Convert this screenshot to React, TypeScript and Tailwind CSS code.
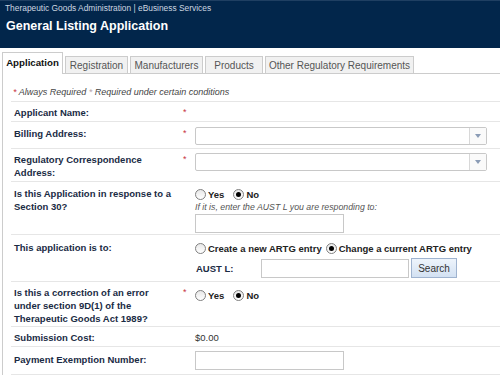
import React from "react";

const TABS = [
  { label: "Application", w: "w-[61px]", active: true },
  { label: "Registration", w: "w-[63px]", active: false },
  { label: "Manufacturers", w: "w-[73px]", active: false },
  { label: "Products", w: "w-[58px]", active: false },
  { label: "Other Regulatory Requirements", w: "w-[149px]", active: false },
];

function Star() {
  return <span className="text-[#c8343f]">*</span>;
}

function Radio({ checked }: { checked?: boolean }) {
  return (
    <span className="inline-flex w-[11px] h-[11px] rounded-full border border-[#808080] bg-gradient-to-b from-[#e8e8e8] to-white items-center justify-center shrink-0">
      {checked && <span className="w-[5px] h-[5px] rounded-full bg-black" />}
    </span>
  );
}

function RadioOpt({ label, checked }: { label: string; checked?: boolean }) {
  return (
    <span className="flex items-center gap-[2px]">
      <Radio checked={checked} />
      <span className="font-bold text-[9.5px] text-[#222]">{label}</span>
    </span>
  );
}

function Select() {
  return (
    <div className="w-[292px] h-[18px] border border-[#c8c8c8] rounded-[2px] bg-white flex justify-end">
      <div className="w-[17px] h-full border-l border-[#d8d8d8] flex items-center justify-center bg-[#fafafa]">
        <svg width="6" height="4" viewBox="0 0 6 4">
          <path d="M0 0 L6 0 L3 4 Z" fill="#8b9cb6" />
        </svg>
      </div>
    </div>
  );
}

function TextInput({ w }: { w: string }) {
  return <div className={`${w} h-[19px] border border-[#c8c8c8] bg-white`} />;
}

function Row({
  h,
  label,
  star,
  lpt,
  cpt,
  children,
}: {
  h: string;
  label: React.ReactNode;
  star?: boolean;
  lpt: string;
  cpt: string;
  children?: React.ReactNode;
}) {
  return (
    <div className={`flex ${h} border-b border-[#e6e6e6] text-[9.5px] leading-[13px]`}>
      <div className={`w-[172px] pl-[3px] ${lpt} font-bold text-[#1a2b44]`}>{label}</div>
      <div className={`w-[12px] ${lpt} text-[9px]`}>{star && <Star />}</div>
      <div className={`flex-1 ${cpt}`}>{children}</div>
    </div>
  );
}

export default function App() {
  return (
    <div className="w-[500px] h-[376px] overflow-hidden bg-white font-['Liberation_Sans',Arial,sans-serif]">
      {/* Header */}
      <div className="h-[48px] bg-[#02264b] border-t border-[#1f3f62] px-[5px]">
        <div className="pt-[1px] text-[8.4px] leading-[12px] text-[#cdd6e0]">
          Therapeutic Goods Administration | eBusiness Services
        </div>
        <div className="mt-[4px] pl-[1px] text-[12.5px] leading-[16px] font-bold text-white">
          General Listing Application
        </div>
      </div>

      {/* Panel */}
      <div className="ml-[2px] mt-[4px] border-l border-[#cccccc]">
        <div className="flex items-end gap-[2px] h-[22px] border-b border-[#cccccc] -ml-px">
          {TABS.map((t) =>
            t.active ? (
              <div
                key={t.label}
                className={`${t.w} h-[22px] -mb-px bg-white border-t border-l border-r border-[#cccccc] flex items-center justify-center font-bold text-[9.7px] text-[#111]`}
              >
                {t.label}
              </div>
            ) : (
              <div
                key={t.label}
                className={`${t.w} h-[17px] bg-[#f1f1f1] border-t border-l border-r border-[#cccccc] flex items-center justify-center text-[10px] text-[#555]`}
              >
                {t.label}
              </div>
            )
          )}
        </div>

        <div className="pl-[8px]">
          {/* Legend */}
          <div className="h-[28px] pt-[12px] pl-[2px] border-b border-[#e6e6e6] italic text-[9px] leading-[12px] text-[#444]">
            <span className="text-[#c8343f]">*</span> Always Required{" "}
            <span className="text-[#b7a3a6]">*</span> Required under certain conditions
          </div>

          <Row h="h-[20px]" label="Applicant Name:" star lpt="pt-[4px]" cpt="pt-[4px]" />

          <Row h="h-[27px]" label="Billing Address:" star lpt="pt-[5px]" cpt="pt-[5px]">
            <Select />
          </Row>

          <Row
            h="h-[33px]"
            label={
              <>
                Regulatory Correspondence
                <br />
                Address:
              </>
            }
            star
            lpt="pt-[4px]"
            cpt="pt-[4px]"
          >
            <Select />
          </Row>

          <Row
            h="h-[53px]"
            label={
              <>
                Is this Application in response to a
                <br />
                Section 30?
              </>
            }
            lpt="pt-[5px]"
            cpt="pt-[6px]"
          >
            <div className="flex items-center gap-[9px] h-[13px]">
              <RadioOpt label="Yes" />
              <RadioOpt label="No" checked />
            </div>
            <div className="italic text-[8.75px] leading-[12px] text-[#555]">
              If it is, enter the AUST L you are responding to:
            </div>
            <div className="mt-[1px]">
              <TextInput w="w-[149px]" />
            </div>
          </Row>

          <Row h="h-[47px]" label="This application is to:" lpt="pt-[6px]" cpt="pt-[6px]">
            <div className="flex items-center gap-[4px] h-[14px]">
              <RadioOpt label="Create a new ARTG entry" />
              <RadioOpt label="Change a current ARTG entry" checked />
            </div>
            <div className="flex items-center mt-[3px] h-[20px]">
              <span className="w-[66px] pl-[1px] font-bold text-[#1a2b44]">AUST L:</span>
              <TextInput w="w-[148px]" />
              <button className="ml-[2px] w-[46px] h-[20px] border border-[#9fb3cf] bg-gradient-to-b from-[#eef4fb] to-[#d3e1f2] text-[10px] text-[#333]">
                Search
              </button>
            </div>
          </Row>

          <Row
            h="h-[45px]"
            label={
              <>
                Is this a correction of an error
                <br />
                under section 9D(1) of the
                <br />
                Therapeutic Goods Act 1989?
              </>
            }
            star
            lpt="pt-[4px]"
            cpt="pt-[7px]"
          >
            <div className="flex items-center gap-[9px] h-[13px]">
              <RadioOpt label="Yes" />
              <RadioOpt label="No" checked />
            </div>
          </Row>

          <Row h="h-[20px]" label="Submission Cost:" lpt="pt-[4px]" cpt="pt-[4px]">
            <span className="text-[#333]">$0.00</span>
          </Row>

          <Row h="h-[28px]" label="Payment Exemption Number:" lpt="pt-[6px]" cpt="pt-[4px]">
            <TextInput w="w-[149px]" />
          </Row>
        </div>
      </div>
    </div>
  );
}
